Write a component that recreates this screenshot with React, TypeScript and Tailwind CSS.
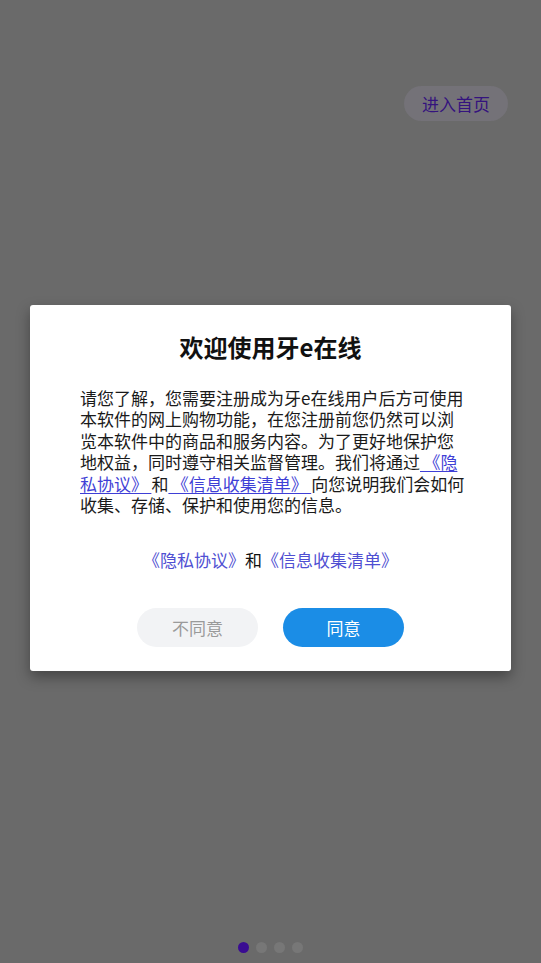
const App = () => {
  return (
    <div
      className="flex h-[963px] w-full flex-col bg-[#6a6a6a]"
      style={{ fontFamily: '"Noto Sans CJK SC", "Noto Sans", sans-serif' }}
    >
      {/* top action */}
      <div className="flex justify-end pr-[33px] pt-[86px]">
        <button className="flex h-[35px] w-[104px] items-center justify-center rounded-full bg-[#747278] text-[17px] text-[#34137e]">
          进入首页
        </button>
      </div>

      {/* privacy dialog */}
      <div className="mx-[30px] mt-[184px] rounded-[3px] bg-white pb-[24px] pt-[26px] shadow-[0_6px_14px_rgba(0,0,0,0.35)]">
        <h2 className="text-center text-[24px] font-bold leading-[32px] text-[#111]">
          欢迎使用牙e在线
        </h2>
        <p className="ml-[50px] mt-[24px] w-[390px] text-[17px] leading-[21.4px] text-[#1a1a1a]">
          请您了解，您需要注册成为牙e在线用户后方可使用本软件的网上购物功能，在您注册前您仍然可以浏览本软件中的商品和服务内容。为了更好地保护您地权益，同时遵守相关监督管理。我们将通过
          <span className="text-[#3f3fd6] underline underline-offset-2">{'\u2009《隐私协议》\u2009'}</span>和
          <span className="text-[#3f3fd6] underline underline-offset-2">{'\u2009《信息收集清单》\u2009'}</span>
          向您说明我们会如何收集、存储、保护和使用您的信息。
        </p>
        <div className="mt-[33px] text-center text-[17px] leading-[24px] text-[#111]">
          <span className="text-[#4f4fd2]">《隐私协议》</span>和
          <span className="text-[#4f4fd2]">《信息收集清单》</span>
        </div>
        <div className="mt-[36px] flex justify-center gap-[25px]">
          <button className="h-[39px] w-[121px] rounded-full bg-[#f2f3f5] text-[17px] text-[#9a9a9a]">
            不同意
          </button>
          <button className="h-[39px] w-[121px] rounded-full bg-[#1b8de6] text-[17px] text-white">
            同意
          </button>
        </div>
      </div>

      {/* pager dots */}
      <div className="mt-auto flex justify-center gap-[7px] pb-[10px]">
        <span className="h-[11px] w-[11px] rounded-full bg-[#3a0c92]" />
        <span className="h-[11px] w-[11px] rounded-full bg-[#777777]" />
        <span className="h-[11px] w-[11px] rounded-full bg-[#777777]" />
        <span className="h-[11px] w-[11px] rounded-full bg-[#777777]" />
      </div>
    </div>
  );
};

export default App;
